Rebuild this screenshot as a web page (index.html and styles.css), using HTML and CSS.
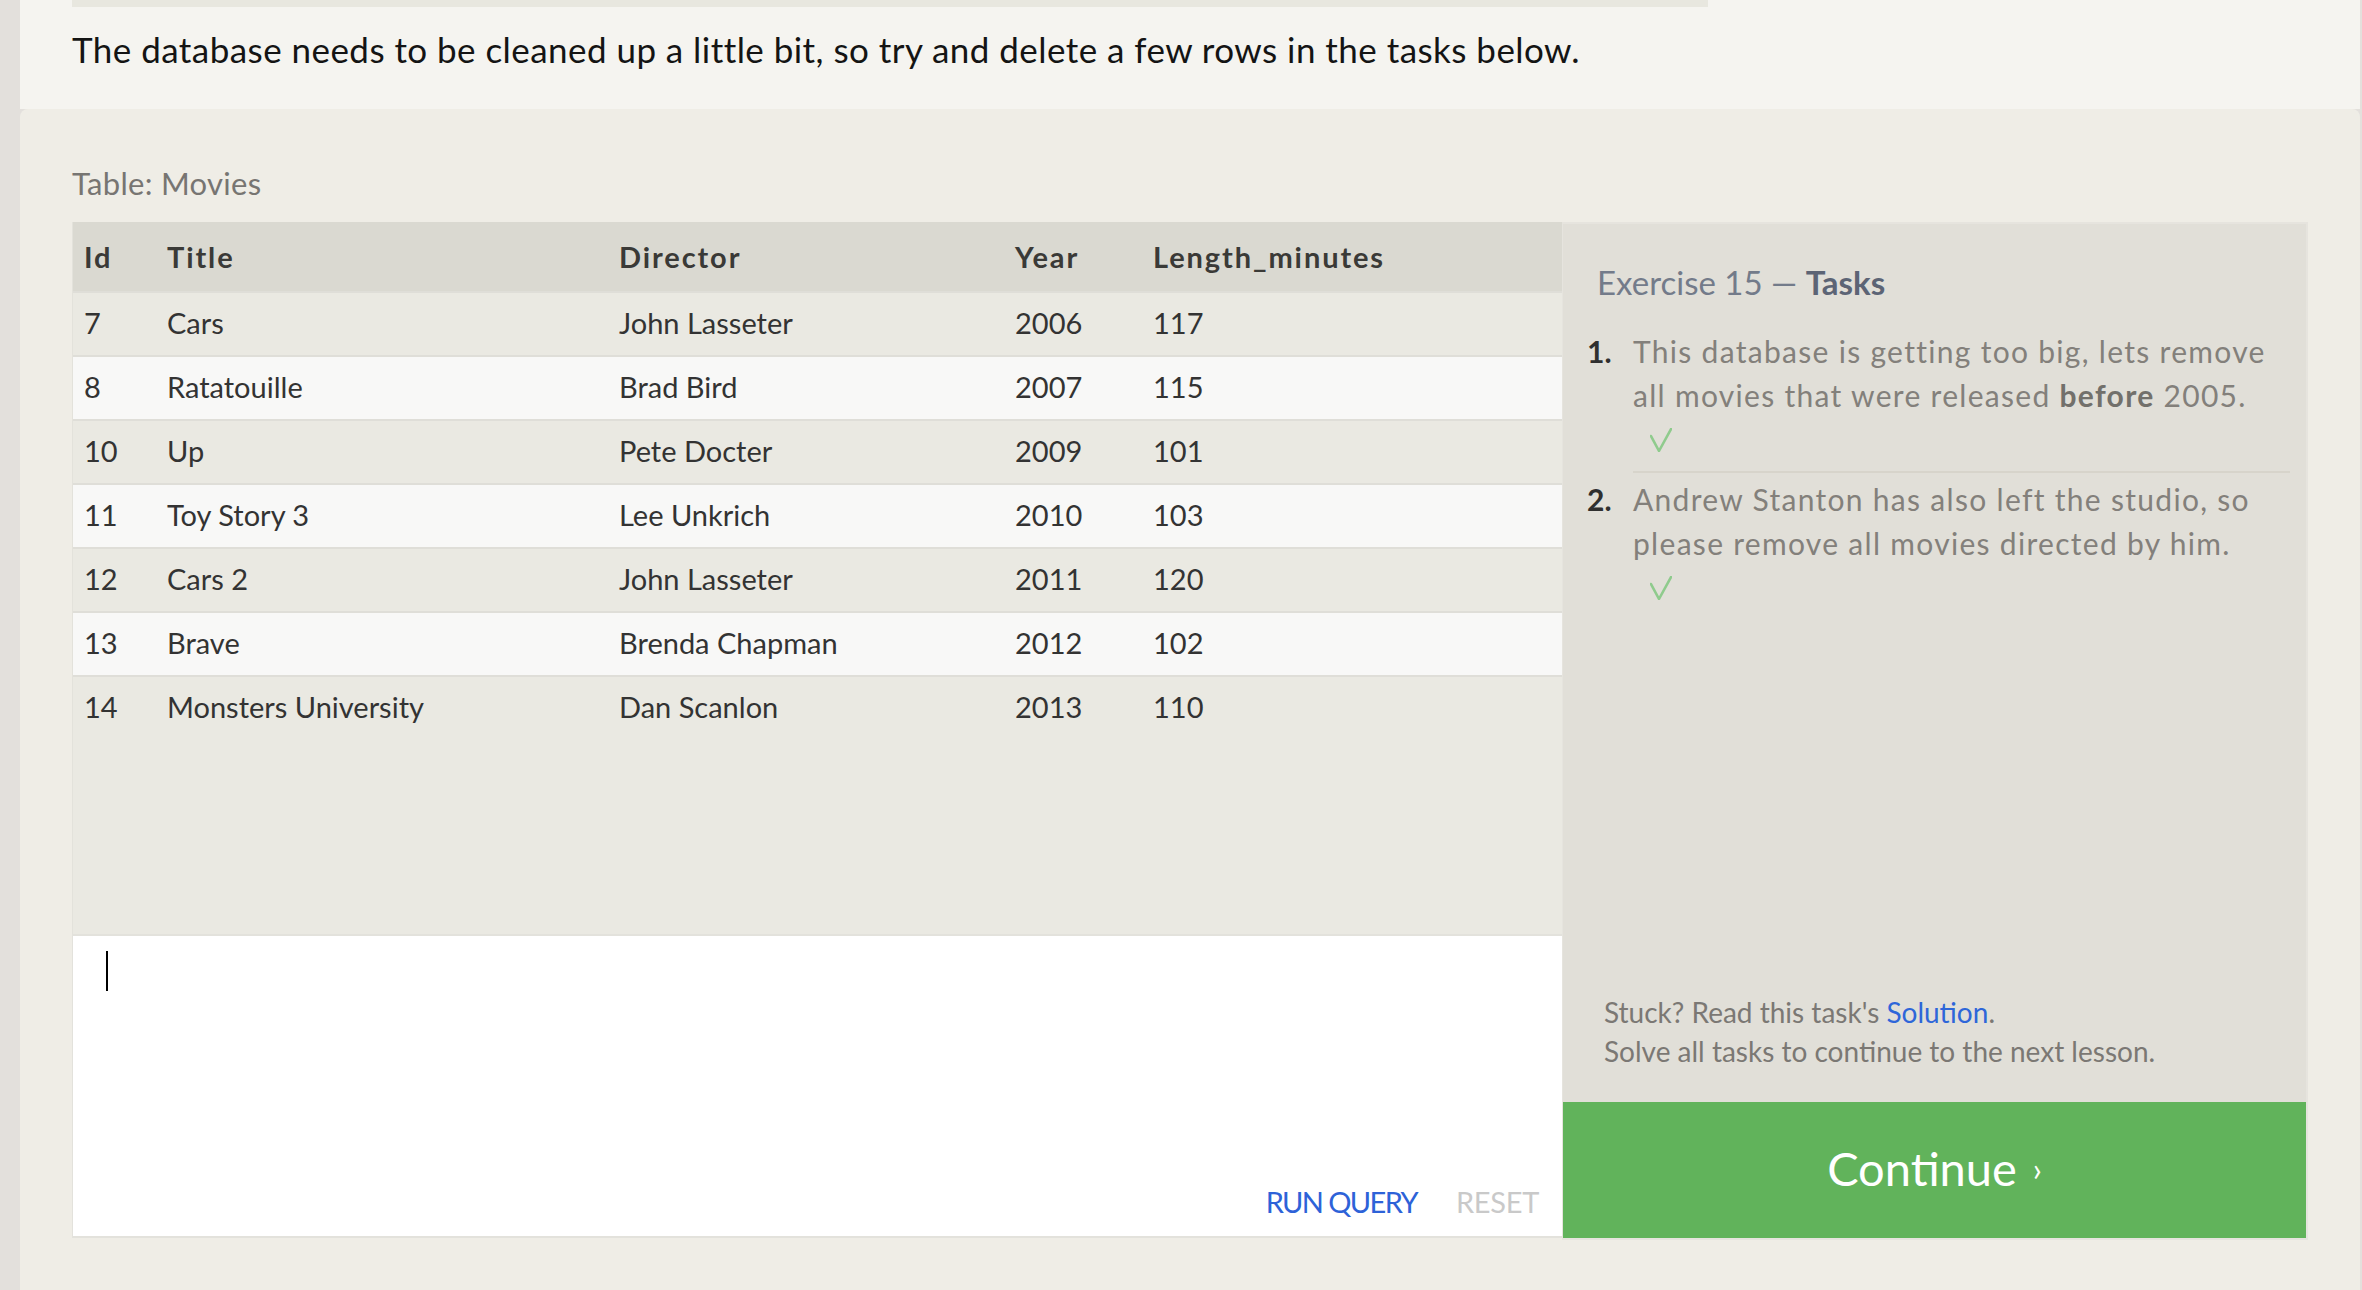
FILE: index.html
```html
<!DOCTYPE html>
<html lang="en">
<head>
<meta charset="utf-8">
<title>SQL Lesson 15</title>
<link rel="stylesheet" href="styles.css">
</head>
<body>
<div class="page">
  <section class="intro">
    <div class="topbar"></div>
    <p class="intro-text">The database needs to be cleaned up a little bit, so try and delete a few rows in the tasks below.</p>
  </section>
  <section class="exercise">
    <div class="table-label">Table: Movies</div>
    <div class="workspace">
      <div class="left">
        <div class="table-panel">
          <div class="row head"><div>Id</div><div>Title</div><div>Director</div><div>Year</div><div>Length_minutes</div></div>
          <div class="row odd"><div>7</div><div>Cars</div><div>John Lasseter</div><div>2006</div><div>117</div></div>
          <div class="row even"><div>8</div><div>Ratatouille</div><div>Brad Bird</div><div>2007</div><div>115</div></div>
          <div class="row odd"><div>10</div><div>Up</div><div>Pete Docter</div><div>2009</div><div>101</div></div>
          <div class="row even"><div>11</div><div>Toy Story 3</div><div>Lee Unkrich</div><div>2010</div><div>103</div></div>
          <div class="row odd"><div>12</div><div>Cars 2</div><div>John Lasseter</div><div>2011</div><div>120</div></div>
          <div class="row even"><div>13</div><div>Brave</div><div>Brenda Chapman</div><div>2012</div><div>102</div></div>
          <div class="row odd"><div>14</div><div>Monsters University</div><div>Dan Scanlon</div><div>2013</div><div>110</div></div>
        </div>
        <div class="editor">
          <span class="cursor"></span>
          <div class="editor-actions"><span class="run">RUN QUERY</span><span class="reset">RESET</span></div>
        </div>
      </div>
      <aside class="tasks">
        <div class="tasks-body">
          <h2 class="tasks-title">Exercise 15 — <span class="tasks-strong">Tasks</span></h2>
          <ol class="task-list">
            <li class="task first">
              <span class="num">1.</span>
              <div class="task-text">This database is getting too big, lets remove all movies that were released <b>before</b> 2005.
                <div class="check-line"><svg class="check" viewBox="0 0 22 24" width="22" height="24"><path d="M1 8 L9 23 L21 1" fill="none" stroke="#8fcb8d" stroke-width="2.6" stroke-linecap="round" stroke-linejoin="round"/></svg></div>
              </div>
            </li>
            <li class="task">
              <span class="num">2.</span>
              <div class="task-text">Andrew Stanton has also left the studio, so please remove all movies directed by him.
                <div class="check-line"><svg class="check" viewBox="0 0 22 24" width="22" height="24"><path d="M1 8 L9 23 L21 1" fill="none" stroke="#8fcb8d" stroke-width="2.6" stroke-linecap="round" stroke-linejoin="round"/></svg></div>
              </div>
            </li>
          </ol>
        </div>
        <div class="stuck">Stuck? Read this task's <a href="#">Solution</a>.<br>Solve all tasks to continue to the next lesson.</div>
        <div class="continue">Continue<span class="chev">›</span></div>
      </aside>
    </div>
  </section>
</div>
</body>
</html>
```

FILE: styles.css
```css
html, body {
  margin: 0;
  padding: 0;
}
body {
  background: #e3e0dc;
  font-family: Lato, "Open Sans", "DejaVu Sans", sans-serif;
  color: #333;
}
.page {
  margin: 0 2px 0 20px;
  height: 1290px;
  display: flex;
  flex-direction: column;
  overflow: hidden;
}
.intro {
  background: #f5f4f0;
  height: 109px;
  padding: 0 52px;
  box-sizing: border-box;
  flex: none;
}
.topbar {
  width: 1636px;
  height: 7px;
  background: #e8e7df;
}
.intro-text {
  margin: 22px 0 0;
  font-size: 35px;
  line-height: 40px;
  letter-spacing: 0.45px;
  color: #141414;
}
.exercise {
  flex: 1;
  background: #efede6;
  border-radius: 8px 8px 0 0;
  padding: 56px 52px 0;
}
.table-label {
  font-size: 31px;
  line-height: 36px;
  letter-spacing: 0.3px;
  color: #777572;
  margin-bottom: 21px;
}
.workspace {
  display: flex;
  align-items: flex-start;
}
.left {
  width: 1490px;
  display: flex;
  flex-direction: column;
}
.table-panel {
  height: 712px;
  background: #eae9e2;
  box-sizing: border-box;
  border-left: 1px solid #e3e2db;
}
.row {
  display: grid;
  grid-template-columns: 83px 452px 396px 138px 1fr;
  height: 64px;
  padding-bottom: 4px;
  align-items: center;
  font-size: 29px;
  color: #333;
  border-top: 2px solid #dfded8;
  box-sizing: border-box;
}
.row > div {
  padding-left: 11px;
}
.row.head {
  height: 69px;
  padding-bottom: 0;
  background: #dad9d1;
  font-weight: 700;
  letter-spacing: 1.9px;
  color: #3a3a37;
  border-top: none;
}
.row.odd { background: #eae9e2; }
.row.even { background: #f8f8f7; }
.editor {
  height: 304px;
  background: #fff;
  border-top: 2px solid #e3e2dc;
  border-bottom: 2px solid #e3e2dc;
  border-left: 1px solid #e3e2dc;
  box-sizing: border-box;
  display: flex;
  flex-direction: column;
  justify-content: space-between;
  padding: 15px 23px 16px 33px;
}
.cursor {
  display: block;
  width: 2px;
  height: 40px;
  background: #000;
}
.editor-actions {
  display: flex;
  justify-content: flex-end;
  gap: 39px;
  font-size: 29px;
  line-height: 36px;
}
.run {
  color: #2d62d8;
  letter-spacing: -1.6px;
}
.reset {
  color: #c9c9c9;
  letter-spacing: -0.3px;
}
.tasks {
  width: 746px;
  height: 1018px;
  box-sizing: border-box;
  background: #e1dfd8;
  border: 2px solid #e6e4de;
  border-left-width: 1px;
  display: flex;
  flex-direction: column;
}
.tasks-body {
  flex: 1;
  padding: 38px 16px 0 24px;
}
.tasks-title {
  margin: 0 0 0 10px;
  font-size: 33px;
  line-height: 40px;
  font-weight: 400;
  color: #737b8a;
}
.tasks-strong {
  color: #5c6475;
  font-weight: 700;
}
.task-list {
  list-style: none;
  margin: 27px 0 0;
  padding: 0;
}
.task {
  display: grid;
  grid-template-columns: 46px 1fr;
  font-size: 30px;
  line-height: 44px;
  color: #83807b;
}
.num {
  color: #2f2f2f;
  font-weight: 700;
}
.task-text {
  letter-spacing: 1.3px;
}
.task-text b {
  color: #72706b;
}
.task.first .task-text {
  padding-bottom: 10px;
  border-bottom: 2px solid #d7d4cb;
  margin-bottom: 4px;
}
.check-line {
  height: 44px;
  display: flex;
  align-items: center;
  padding-left: 17px;
}
.check {
  display: block;
  margin-top: 2px;
}
.stuck {
  padding: 0 0 31px 41px;
  font-size: 28px;
  line-height: 39px;
  color: #7b7874;
}
.stuck a {
  color: #2e66d9;
  text-decoration: none;
}
.continue {
  height: 136px;
  padding-bottom: 4px;
  box-sizing: border-box;
  background: #61b35b;
  color: #fff;
  font-size: 47px;
  display: flex;
  align-items: center;
  justify-content: center;
}
.chev {
  font-size: 32px;
  margin-left: 16px;
}
```
